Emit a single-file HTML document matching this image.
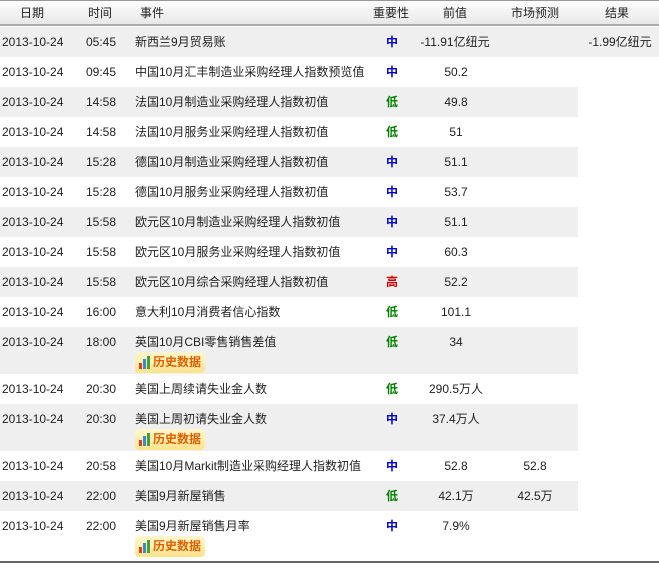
<!DOCTYPE html>
<html><head><meta charset="utf-8"><style>
*{margin:0;padding:0;box-sizing:border-box}
body{width:659px;height:568px;background:#fff;font-family:"Liberation Sans","Noto Sans CJK SC",sans-serif;font-size:12px;color:#222;position:relative;overflow:hidden}
.hd{position:absolute;left:0;top:0;width:659px;height:26px;border-top:1px solid #999;border-bottom:2px solid #aaa;background:linear-gradient(#fdfdfd,#e8e8e8)}
.hd span,.r span{position:absolute;white-space:nowrap;line-height:14px}
.hd span{top:5px}
.r{position:absolute;left:0;width:659px}
.g{background:linear-gradient(to right,#efefef 578px,#fff 578px)}
.g1{background:#efefef}
.r span{top:8px}
.c{transform:translateX(-50%)}
.m{color:#0000cc;font-weight:bold}
.l{color:#008000;font-weight:bold}
.h{color:#cc0000;font-weight:bold}
.btn{position:absolute;left:135px;top:25px;width:70px;height:21px;border-radius:4px;background:linear-gradient(#fff7d0,#ffe38a);color:#e06000;font-weight:bold;font-size:12px;line-height:21px;padding-left:18px}
.btn i{position:absolute;bottom:4px;width:3px}
.foot{position:absolute;left:0;top:561px;width:659px;height:2px;background:#666}
</style></head><body>
<div class="hd">
<span style="left:20px">日期</span><span style="left:88px">时间</span><span style="left:140px">事件</span><span style="left:373px">重要性</span><span style="left:443px">前值</span><span style="left:511px">市场预测</span><span style="left:605px">结果</span>
</div>

<div class="r g1" style="top:27px;height:30px"><span style="left:2px">2013-10-24</span><span style="left:86px">05:45</span><span style="left:135px">新西兰9月贸易账</span><span class="c m" style="left:392px">中</span><span class="c" style="left:455px">-11.91亿纽元</span><span class="c" style="left:620px">-1.99亿纽元</span></div>
<div class="r" style="top:57px;height:30px"><span style="left:2px">2013-10-24</span><span style="left:86px">09:45</span><span style="left:135px">中国10月汇丰制造业采购经理人指数预览值</span><span class="c m" style="left:392px">中</span><span class="c" style="left:456px">50.2</span></div>
<div class="r g" style="top:87px;height:30px"><span style="left:2px">2013-10-24</span><span style="left:86px">14:58</span><span style="left:135px">法国10月制造业采购经理人指数初值</span><span class="c l" style="left:392px">低</span><span class="c" style="left:456px">49.8</span></div>
<div class="r" style="top:117px;height:30px"><span style="left:2px">2013-10-24</span><span style="left:86px">14:58</span><span style="left:135px">法国10月服务业采购经理人指数初值</span><span class="c l" style="left:392px">低</span><span class="c" style="left:456px">51</span></div>
<div class="r g" style="top:147px;height:30px"><span style="left:2px">2013-10-24</span><span style="left:86px">15:28</span><span style="left:135px">德国10月制造业采购经理人指数初值</span><span class="c m" style="left:392px">中</span><span class="c" style="left:456px">51.1</span></div>
<div class="r" style="top:177px;height:30px"><span style="left:2px">2013-10-24</span><span style="left:86px">15:28</span><span style="left:135px">德国10月服务业采购经理人指数初值</span><span class="c m" style="left:392px">中</span><span class="c" style="left:456px">53.7</span></div>
<div class="r g" style="top:207px;height:30px"><span style="left:2px">2013-10-24</span><span style="left:86px">15:58</span><span style="left:135px">欧元区10月制造业采购经理人指数初值</span><span class="c m" style="left:392px">中</span><span class="c" style="left:456px">51.1</span></div>
<div class="r" style="top:237px;height:30px"><span style="left:2px">2013-10-24</span><span style="left:86px">15:58</span><span style="left:135px">欧元区10月服务业采购经理人指数初值</span><span class="c m" style="left:392px">中</span><span class="c" style="left:456px">60.3</span></div>
<div class="r g" style="top:267px;height:30px"><span style="left:2px">2013-10-24</span><span style="left:86px">15:58</span><span style="left:135px">欧元区10月综合采购经理人指数初值</span><span class="c h" style="left:392px">高</span><span class="c" style="left:456px">52.2</span></div>
<div class="r" style="top:297px;height:30px"><span style="left:2px">2013-10-24</span><span style="left:86px">16:00</span><span style="left:135px">意大利10月消费者信心指数</span><span class="c l" style="left:392px">低</span><span class="c" style="left:456px">101.1</span></div>
<div class="r g" style="top:327px;height:47px"><span style="left:2px">2013-10-24</span><span style="left:86px">18:00</span><span style="left:135px">英国10月CBI零售销售差值</span><span class="c l" style="left:392px">低</span><span class="c" style="left:456px">34</span>
<div class="btn"><i style="left:4px;height:6px;background:#e04020"></i><i style="left:8px;height:10px;background:#3a8ad0"></i><i style="left:12px;height:13px;background:#40a040"></i>历史数据</div></div>
<div class="r" style="top:374px;height:30px"><span style="left:2px">2013-10-24</span><span style="left:86px">20:30</span><span style="left:135px">美国上周续请失业金人数</span><span class="c l" style="left:392px">低</span><span class="c" style="left:456px">290.5万人</span></div>
<div class="r g" style="top:404px;height:47px"><span style="left:2px">2013-10-24</span><span style="left:86px">20:30</span><span style="left:135px">美国上周初请失业金人数</span><span class="c m" style="left:392px">中</span><span class="c" style="left:456px">37.4万人</span>
<div class="btn"><i style="left:4px;height:6px;background:#e04020"></i><i style="left:8px;height:10px;background:#3a8ad0"></i><i style="left:12px;height:13px;background:#40a040"></i>历史数据</div></div>
<div class="r" style="top:451px;height:30px"><span style="left:2px">2013-10-24</span><span style="left:86px">20:58</span><span style="left:135px">美国10月Markit制造业采购经理人指数初值</span><span class="c m" style="left:392px">中</span><span class="c" style="left:456px">52.8</span><span class="c" style="left:535px">52.8</span></div>
<div class="r g" style="top:481px;height:30px"><span style="left:2px">2013-10-24</span><span style="left:86px">22:00</span><span style="left:135px">美国9月新屋销售</span><span class="c l" style="left:392px">低</span><span class="c" style="left:456px">42.1万</span><span class="c" style="left:535px">42.5万</span></div>
<div class="r" style="top:511px;height:47px"><span style="left:2px">2013-10-24</span><span style="left:86px">22:00</span><span style="left:135px">美国9月新屋销售月率</span><span class="c m" style="left:392px">中</span><span class="c" style="left:456px">7.9%</span>
<div class="btn"><i style="left:4px;height:6px;background:#e04020"></i><i style="left:8px;height:10px;background:#3a8ad0"></i><i style="left:12px;height:13px;background:#40a040"></i>历史数据</div></div>
<div class="foot"></div>
</body></html>
